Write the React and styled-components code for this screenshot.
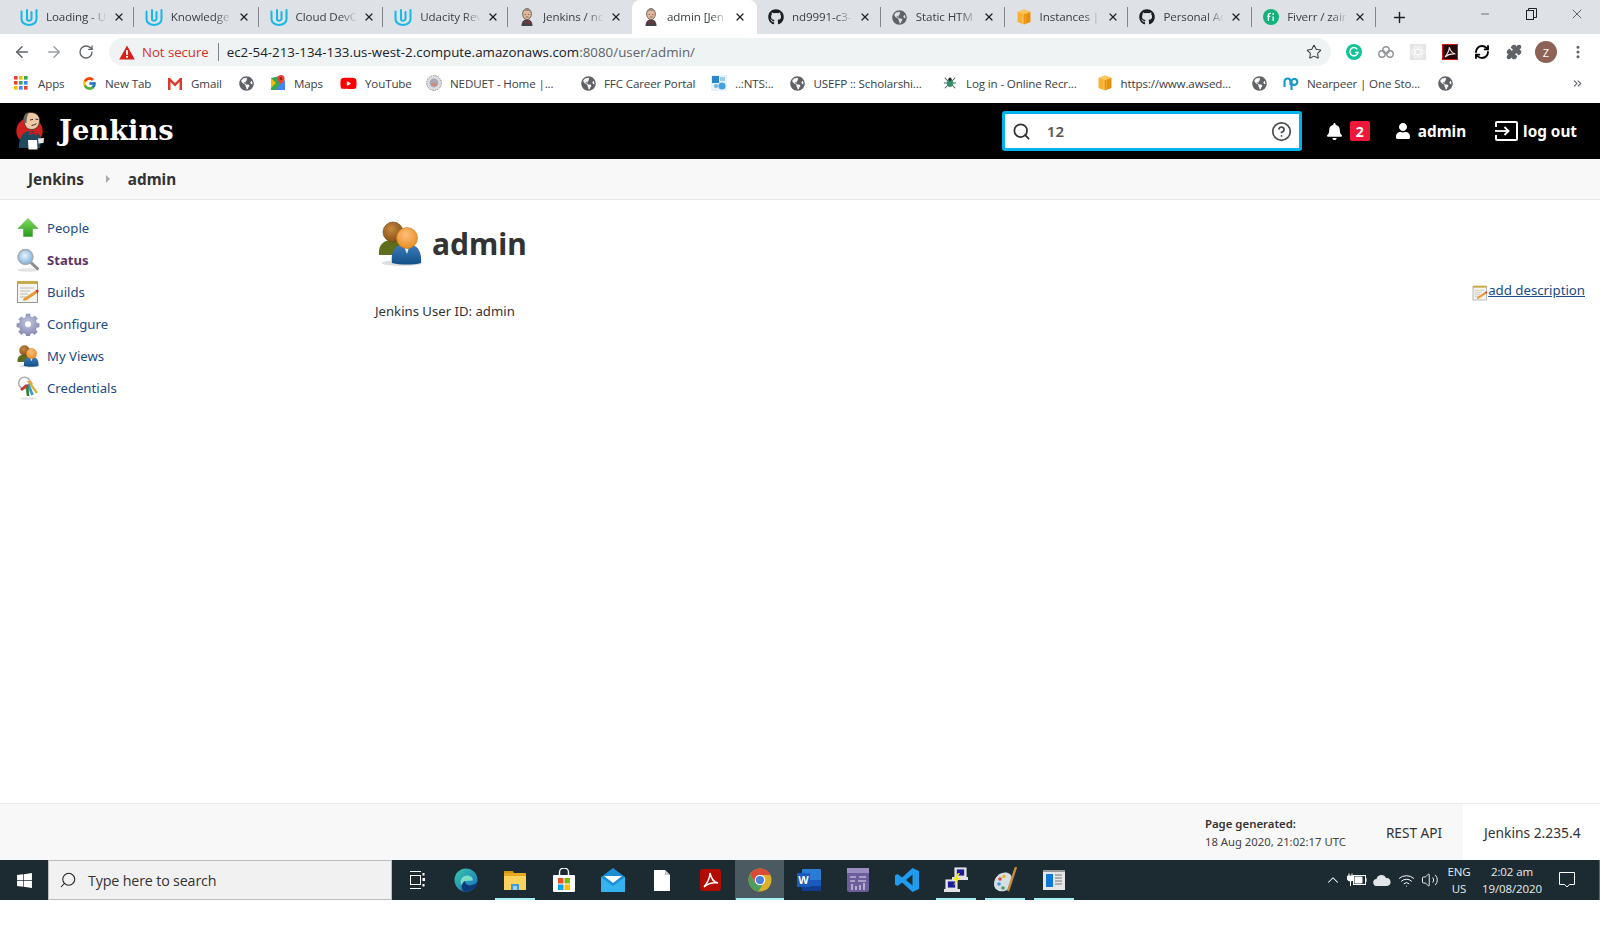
import React, { useId } from "react";
import styled, { createGlobalStyle } from "styled-components";
import { ArrowLeft, ArrowRight, RotateCw, Star, X, Plus, Minus, Search, CircleHelp, Puzzle, RefreshCw, EllipsisVertical, ChevronUp, ChevronsRight, Volume2, Wifi } from "lucide-react";
import { FaGithub, FaGlobeAmericas, FaYoutube, FaWindows, FaBell, FaUser } from "react-icons/fa";
import { FcGoogle } from "react-icons/fc";

const Global = createGlobalStyle`
  html, body { margin: 0; padding: 0; background: #fff; }
  body { font-family: "Noto Sans", "Open Sans", sans-serif; overflow: hidden; }
  a { text-decoration: none; color: inherit; }
`;

const Frame = styled.div`
  width: 1600px; height: 900px; display: flex; flex-direction: column; background: #fff;
`;

/* ---------- browser chrome ---------- */
const TabStrip = styled.div`
  height: 34px; flex: none; display: flex; align-items: stretch; padding-left: 9px; background: #dee1e6; box-sizing: border-box;
`;
const Tab = styled.div`
  flex: 0 0 ${p => p.$w}px; box-sizing: border-box; display: flex; align-items: center; padding-left: 11px; position: relative;
  background: ${p => (p.$active ? "#fff" : "transparent")};
  border-radius: ${p => (p.$active ? "8px 8px 0 0" : "0")};
  &::after {
    content: ""; display: ${p => (p.$sep ? "block" : "none")}; position: absolute; right: 0; top: 7px; bottom: 7px; width: 1px; background: #80868b;
  }
`;
const TabIcon = styled.span`
  flex: 0 0 16px; height: 18px; display: flex; align-items: center; justify-content: center;
`;
const TabTitle = styled.span`
  width: 61px; margin: -2px 0 0 8px; white-space: nowrap; overflow: hidden; font: 11.6px "Open Sans", sans-serif; color: #3c4043; letter-spacing: -0.1px;
  -webkit-mask-image: linear-gradient(to right, #000 72%, transparent 100%);
  mask-image: linear-gradient(to right, #000 72%, transparent 100%);
`;
const TabClose = styled.span`
  width: 12px; height: 12px; margin-left: 6px; display: flex; align-items: center; justify-content: center; color: #202124;
`;
const NewTab = styled.span`
  width: 48px; display: flex; align-items: center; justify-content: center; color: #202124;
`;
const WindowButtons = styled.div`
  margin-left: auto; display: flex; align-items: flex-start; color: #202124;
`;
const WindowButton = styled.span`
  width: 46px; height: 28px; display: flex; align-items: center; justify-content: center;
`;
const AddressRow = styled.div`
  height: 34px; flex: none; display: flex; align-items: center; background: #fff; box-sizing: border-box; padding-top: 2px;
`;
const NavButton = styled.span`
  flex: 0 0 32px; display: flex; justify-content: center; align-items: center; color: ${p => p.$dim ? "#9aa0a6" : "#5f6368"};
`;
const NavGroup = styled.div`
  display: flex; padding-left: 6px; width: 109px; box-sizing: border-box;
`;
const Omnibox = styled.div`
  width: 1222px; height: 28px; border-radius: 14px; background: #eff3f4; display: flex; align-items: center; padding: 0 10px; box-sizing: border-box;
`;
const NotSecure = styled.span`
  font: 13.2px "Open Sans", sans-serif; color: #d93025; margin-left: 7px; letter-spacing: -0.02px; white-space: nowrap;
`;
const Divider = styled.span`
  width: 1px; height: 18px; background: #80868b; margin: 0 8px 0 9px;
`;
const Url = styled.span`
  font: 13.3px "Open Sans", sans-serif; color: #202124; white-space: nowrap; letter-spacing: 0.03px;
  span { color: #5f6368; }
`;
const StarSlot = styled.span`
  margin-left: auto; margin-right: -1px; display: flex; color: #3c4043;
`;
const ExtGroup = styled.div`
  display: flex; margin-left: 7px;
`;
const Ext = styled.span`
  flex: 0 0 32px; display: flex; align-items: center; justify-content: center; color: #202124;
`;
const Avatar = styled.span`
  width: 22px; height: 22px; border-radius: 50%; background: #8d6357; color: #fff; font: 11px "Open Sans", sans-serif; display: flex; align-items: center; justify-content: center;
`;
const BookmarkBar = styled.div`
  height: 35px; flex: none; display: flex; align-items: center; padding: 0 0 5px 13px; background: #fff; box-sizing: border-box;
`;
const Bookmark = styled.div`
  flex: 0 0 ${p => p.$w}px; display: flex; align-items: center; min-width: 0;
`;
const BookmarkIcon = styled.span`
  flex: 0 0 16px; height: 16px; display: flex; align-items: center; justify-content: center;
`;
const BookmarkText = styled.span`
  margin-left: ${p => p.$gap || 8}px; font: 11.6px "Open Sans", sans-serif; color: #3c4043; white-space: nowrap; letter-spacing: -0.14px;
`;
const Overflow = styled.span`
  margin-left: auto; margin-right: 16px; display: flex; color: #5f6368;
`;

/* ---------- Jenkins header ---------- */
const Header = styled.header`
  height: 56px; flex: none; display: flex; align-items: center; background: #000; color: #fff; box-sizing: border-box; padding-left: 16px;
`;
const LogoLink = styled.a`
  display: flex; align-items: center; gap: 13px;
`;
const LogoText = styled.span`
  font: bold 27.3px "DejaVu Serif", serif; color: #fff; line-height: 1;
`;
const SearchBox = styled.div`
  width: 300px; height: 40px; margin-left: auto; box-sizing: border-box; border: 3px solid #00b2f0; border-radius: 3px; background: #fff; display: flex; align-items: center; padding: 0 7px 0 7px; color: #333;
`;
const SearchValue = styled.span`
  font: 600 15px "Noto Sans", sans-serif; color: #555; margin-left: 16px;
`;
const HelpSlot = styled.span`
  margin-left: auto; display: flex; color: #4a4f55;
`;
const HeaderActions = styled.div`
  display: flex; align-items: center; margin-left: 24px; padding-right: 23px;
`;
const Badge = styled.span`
  width: 20px; height: 20px; background: #f0183a; border-radius: 2px; font: bold 14px "Noto Sans", sans-serif; color: #fff; display: flex; align-items: center; justify-content: center; margin-left: 7px;
`;
const HeaderLink = styled.a`
  display: flex; align-items: center; font: bold 15.3px "Noto Sans", sans-serif; color: #fff; margin-left: ${p => p.$ml}px; gap: ${p => p.$gap}px;
`;

/* ---------- breadcrumb ---------- */
const Breadcrumbs = styled.nav`
  height: 41px; flex: none; box-sizing: border-box; border-bottom: 1px solid #e9e9e9; background: #f8f8f8; display: flex; align-items: center; padding-left: 28px; font: bold 15.3px "Noto Sans", sans-serif; color: #333;
`;
const CrumbSep = styled.span`
  margin: 0 18px 0 22px; display: block; width: 0; height: 0; border-left: 4px solid #aaa; border-top: 4px solid transparent; border-bottom: 4px solid transparent;
`;

/* ---------- page body ---------- */
const Body = styled.div`
  flex: 1; display: flex; min-height: 0; background: #fff;
`;
const Side = styled.aside`
  flex: 0 0 375px; padding: 12px 0 0 16px; box-sizing: border-box; display: flex; flex-direction: column;
`;
const SideRow = styled.a`
  height: 32px; display: flex; align-items: center; gap: 7px; font: ${p => (p.$current ? "bold" : "normal")} 13.15px "Noto Sans", sans-serif; color: ${p => (p.$current ? "#5c3566" : "#204a87")};
`;
const SideIcon = styled.span`
  flex: 0 0 24px; height: 24px; display: flex; align-items: center; justify-content: center;
`;
const Main = styled.main`
  flex: 1; display: flex; flex-direction: column; padding-right: 15px;
`;
const Title = styled.h1`
  margin: 18px 0 0 1px; height: 50px; display: flex; align-items: center; gap: 8px; font: bold 30px "Noto Sans", sans-serif; color: #333;
`;
const DescriptionRow = styled.div`
  margin-top: 11px; display: flex; justify-content: flex-end; align-items: flex-end; height: 20px;
`;
const DescriptionLink = styled.a`
  font: 13.3px "Noto Sans", sans-serif; color: #204a87; text-decoration: underline; letter-spacing: -0.03px; display: flex;
  svg { margin: 4px 0 -4px; }
`;
const UserId = styled.p`
  margin: 2px 0 0; font: 13.15px/20px "Noto Sans", sans-serif; color: #333;
`;

/* ---------- footer ---------- */
const Footer = styled.footer`
  height: 57px; flex: none; box-sizing: border-box; border-top: 1px solid #e9e9e9; background: #f8f8f8; display: flex; align-items: stretch; justify-content: flex-end;
`;
const Generated = styled.div`
  display: flex; flex-direction: column; justify-content: center; margin-right: 40px; color: #333; padding-top: 1px;
`;
const GeneratedLabel = styled.span`
  font: 600 11.4px/17px "Noto Sans", sans-serif;
`;
const GeneratedDate = styled.span`
  font: 11.3px/19px "Noto Sans", sans-serif; color: #444;
`;
const RestLink = styled.a`
  font: 13.6px "Noto Sans", sans-serif; color: #333; align-self: center; margin: 1px 21px 0 0;
`;
const Version = styled.div`
  width: 137px; box-sizing: border-box; background: #fff; display: flex; align-items: center; padding: 1px 0 0 21px; font: 13.8px "Noto Sans", sans-serif; color: #333;
`;

/* ---------- taskbar ---------- */
const Taskbar = styled.div`
  height: 40px; flex: none; display: flex; align-items: stretch; background: #1b2b31; color: #fff; border-right: 1px solid #53666d; box-sizing: border-box;
`;
const StartButton = styled.div`
  width: 48px; display: flex; align-items: center; justify-content: center; color: #fff;
`;
const TaskSearch = styled.div`
  width: 344px; box-sizing: border-box; background: #f1f1f1; border: 1px solid #bdbdbd; display: flex; align-items: center; padding-left: 10px; color: #222;
`;
const TaskSearchText = styled.span`
  margin-left: 11px; font: 14.3px "Open Sans", sans-serif; color: #333; letter-spacing: -0.17px;
`;
const TaskApps = styled.div`
  display: flex;
`;
const TaskApp = styled.div`
  flex: 0 0 49px; display: flex; align-items: center; justify-content: center; position: relative;
  background: ${p => (p.$active ? "#4a5a60" : "transparent")};
  &::after {
    content: ""; display: ${p => (p.$open ? "block" : "none")}; position: absolute; bottom: 0; left: 50%; transform: translateX(-50%); width: ${p => p.$bar || 40}px; height: 2px; background: #a6eef9;
  }
`;
const Tray = styled.div`
  margin-left: auto; display: flex; align-items: stretch; padding-right: 13px;
`;
const TrayIcon = styled.span`
  flex: 0 0 ${p => p.$w || 24}px; display: flex; align-items: center; justify-content: center;
`;
const TrayText = styled.div`
  flex: 0 0 ${p => p.$w}px; display: flex; flex-direction: column; align-items: center; justify-content: center; font: 11.5px/17px "Open Sans", sans-serif; color: #e8ecee; letter-spacing: -0.1px;
`;
const BottomStrip = styled.div`
  height: 44px; background: #fff;
`;

/* ---------- drawn icons ---------- */
const UdacityIcon = () => (
  <svg width="18" height="17" viewBox="0 0 18 17" fill="none" style={{ flex: "none" }}>
    <path d="M1.500 2.500 V10 C1.500 13.500 5 15.500 9 16 C13 15.500 16.500 13.500 16.500 10 V1" stroke="#16b8e6" strokeWidth="2" strokeLinecap="round"/>
    <path d="M7 1 V10.500 C7 12.300 11 12 11.500 10 V3" stroke="#16b8e6" strokeWidth="2" strokeLinecap="round"/>
  </svg>
);
const ButlerIcon = () => (
  <svg width="16" height="18" viewBox="0 0 16 18">
    <path d="M2.500 18 C2.500 13 5 11.500 8 11.500 C11 11.500 13.500 13 13.500 18Z" fill="#46424a"/>
    <ellipse cx="8" cy="6" rx="4.400" ry="5.600" fill="#e3b89a" stroke="#5d5148" strokeWidth=".8"/>
    <path d="M3.800 5 C3.800 1.500 6 .4 8 .4 C10 .4 12.200 1.500 12.200 5 L10.500 3 H5.500Z" fill="#9a8f86"/>
    <path d="M5.800 13 l2.200 1.400 2.200 -1.400 v2.600 l-2.200 -1.200 -2.200 1.200Z" fill="#b8232f"/>
    <path d="M5.600 6.500h1.500M8.900 6.500h1.500M6.600 9 h3" stroke="#5d5148" strokeWidth=".7"/>
  </svg>
);
const Globe = () => <FaGlobeAmericas size={15} color="#5f6368" />;
const AwsBox = () => (
  <svg width="16" height="16" viewBox="0 0 16 16">
    <path d="M8 0.5 L14.5 3 V13 L8 15.5Z" fill="#e8900c"/>
    <path d="M8 0.5 L1.5 3 V13 L8 15.5Z" fill="#f9b030"/>
    <path d="M1.5 3 L8 5.2 L14.5 3 L8 .5Z" fill="#fcc660"/>
    <path d="M6.6 5v10M9.4 5v10" stroke="#fff3" strokeWidth="1"/>
  </svg>
);
const FiverrIcon = () => (
  <svg width="16" height="16" viewBox="0 0 16 16">
    <circle cx="8" cy="8" r="8" fill="#10b37a"/>
    <path d="M5.4 12 V6.4 C5.4 4.6 6.6 4.2 8 4.4 M4.2 7.4 H7.4 M10.2 7.4 V12" stroke="#fff" strokeWidth="1.4" fill="none"/>
    <circle cx="10.2" cy="5" r=".9" fill="#fff"/>
  </svg>
);
const WarningIcon = () => (
  <svg width="16" height="15" viewBox="0 0 16 15">
    <path d="M8 .5 L15.8 14.5 H.2Z" fill="#d6201a"/>
    <rect x="7.1" y="5" width="1.8" height="5" fill="#fff"/>
    <rect x="7.1" y="11" width="1.8" height="1.8" fill="#fff"/>
  </svg>
);
const RestoreIcon = () => (
  <svg width="11" height="12" viewBox="0 0 11 12" fill="none" stroke="#202124">
    <rect x=".5" y="2.5" width="7" height="9"/><path d="M2.5 2.5 V.5 H10.5 V9.5 H7.5"/>
  </svg>
);
const AppsGrid = () => {
  const c = ["#ea4335","#fbbc04","#34a853","#ea4335","#34a853","#4285f4","#fbbc04","#4285f4","#ea4335"];
  return (
    <svg width="14" height="14" viewBox="0 0 14 14">
      {c.map((f, i) => <rect key={i} x={(i % 3) * 5} y={Math.floor(i / 3) * 5} width="3.6" height="3.6" fill={f}/>)}
    </svg>
  );
};
const GmailIcon = () => (
  <svg width="16" height="13" viewBox="0 0 16 13">
    <path d="M1 13 V1 H3 L8 6 L13 1 H15 V13 H12.5 V5 L8 9.4 L3.5 5 V13Z" fill="#d93a2c"/>
  </svg>
);
const MapsIcon = () => (
  <svg width="16" height="16" viewBox="0 0 16 16">
    <path d="M1 3 L10 1 V15 L1 15Z" fill="#34a853"/><path d="M10 9 L15 5 V15 H6Z" fill="#4285f4"/><path d="M1 3 L6 8 L1 13Z" fill="#fbbc04"/>
    <path d="M11 0 A3.6 3.6 0 0 1 14.6 3.6 C14.6 6 12 7.5 11 10 C10 7.5 7.4 6 7.4 3.6 A3.6 3.6 0 0 1 11 0Z" fill="#ea4335"/>
    <circle cx="11" cy="3.6" r="1.3" fill="#8e1b12"/>
  </svg>
);
const NeduetIcon = () => (
  <svg width="16" height="16" viewBox="0 0 16 16">
    <circle cx="8" cy="8" r="7.4" fill="#ddd" stroke="#8a8a8a" strokeDasharray="1.4 1"/>
    <circle cx="8" cy="8" r="4.4" fill="#a8a6b8"/><path d="M5 11h6l-1-3H6Z" fill="#d08a7c"/>
  </svg>
);
const NtsIcon = () => (
  <svg width="16" height="16" viewBox="0 0 16 16">
    <rect width="16" height="16" fill="#e8f2fb"/><rect x="1" y="1" width="7" height="7" fill="#2a86c8"/>
    <circle cx="11" cy="11" r="3.6" fill="#46a3dc"/><circle cx="5" cy="11" r="2" fill="#6fb5e2"/><path d="M9 2h5v4H9Z" fill="#9ccbea"/>
  </svg>
);
const BugIcon = () => (
  <svg width="14" height="14" viewBox="0 0 16 16">
    <path d="M2 2 L14 14 M14 2 L2 14 M1 8 H15" stroke="#4a5a4e" strokeWidth="1.2"/>
    <ellipse cx="8" cy="8" rx="3.4" ry="4.6" fill="#2f8f66"/><circle cx="8" cy="3.6" r="1.8" fill="#222"/>
  </svg>
);
const NearpeerIcon = () => (
  <svg width="16" height="16" viewBox="0 0 16 16" fill="none" stroke="#1597c9" strokeWidth="2.1">
    <path d="M1.5 12 V6.5 A3 3 0 0 1 7.5 6.5 V10"/><path d="M8.5 15 V6 A3 3 0 1 1 9.2 9" />
  </svg>
);
const GrammarlyIcon = () => (
  <svg width="16" height="16" viewBox="0 0 16 16">
    <circle cx="8" cy="8" r="8" fill="#12c39a"/>
    <path d="M11.4 5.4 A4.1 4.1 0 1 0 12 8.5 H9" stroke="#fff" strokeWidth="1.4" fill="none"/>
  </svg>
);
const CloudExt = () => (
  <svg width="18" height="14" viewBox="0 0 18 14" fill="none" stroke="#8f9499" strokeWidth="1.4">
    <circle cx="5" cy="9" r="3.2"/><circle cx="13" cy="9" r="3.2"/><circle cx="9" cy="5" r="3.2"/>
  </svg>
);
const ReactExt = () => (
  <svg width="16" height="16" viewBox="0 0 16 16" fill="none" stroke="#fff" strokeWidth=".8">
    <rect width="16" height="16" fill="#e5e5e5" stroke="none"/>
    <ellipse cx="8" cy="8" rx="6.4" ry="2.6"/><ellipse cx="8" cy="8" rx="6.4" ry="2.6" transform="rotate(60 8 8)"/><ellipse cx="8" cy="8" rx="6.4" ry="2.6" transform="rotate(120 8 8)"/>
  </svg>
);
const AcrobatExt = () => (
  <svg width="16" height="16" viewBox="0 0 16 16">
    <rect x=".5" y=".5" width="15" height="15" fill="#24090b" stroke="#d6121f"/>
    <path d="M3 13 C6 9 7.5 6 7.4 3 C8 6 9.5 9 13.4 10 C10 9.6 6 10.4 3 13Z" fill="none" stroke="#eedcdc" strokeWidth="1.1"/>
  </svg>
);
const JenkinsLogo = () => (
  <svg width="30" height="40" viewBox="0 0 30 40">
    <circle cx="13.500" cy="20" r="13.200" fill="#d0201f"/>
    <path d="M3 37 C2.500 28 6 21 13 20 C19 19.500 24 22 25 28 L24 37Z" fill="#1f4a5e"/>
    <path d="M8 10 C7.500 4 10.500 1.500 15 1.500 C20 1.500 23.800 4.500 23.500 10 C23.200 15.500 20 18.500 15.500 18.500 C11 18.500 8.500 15 8 10Z" fill="#efc9a6" stroke="#3e2d27" strokeWidth=".8"/>
    <path d="M7.800 12 C6.500 6 9 2 13 1.500 C11 4 10.500 8 10.500 12Z" fill="#6a6560"/>
    <path d="M14 9 l3 -.6 M19.500 8.200 l2.600 .3 M15.500 14.500 q3 -.4 5 -1.800" stroke="#3e2d27" strokeWidth="1" fill="none"/>
    <path d="M13 19.500 L17 21.500 L21 19.500 V24.500 L17 22.500 L13 24.500Z" fill="#c81d25"/>
    <path d="M12 29 H21 L21.500 38.500 H12.500Z" fill="#fff"/>
    <path d="M22 27.500 L28 27 L27.500 32 L22.500 32.500Z" fill="#e8e8e8"/>
  </svg>
);

const PeopleIcon = ({ size }) => {
  const id = useId();
  return (
    <svg width={size} height={size} viewBox="0 0 48 48">
      <defs>
        <radialGradient id={id + "a"} cx=".4" cy=".35" r=".7"><stop offset="0" stopColor="#c9893f"/><stop offset="1" stopColor="#7d4d15"/></radialGradient>
        <radialGradient id={id + "b"} cx=".45" cy=".35" r=".7"><stop offset="0" stopColor="#fcc07a"/><stop offset="1" stopColor="#e88a1e"/></radialGradient>
        <linearGradient id={id + "c"} x1="0" y1="0" x2="0" y2="1"><stop offset="0" stopColor="#3b7fbe"/><stop offset="1" stopColor="#134f87"/></linearGradient>
      </defs>
      <ellipse cx="26" cy="44" rx="20" ry="3" fill="#00000022"/>
      <path d="M3 36 C2 25 8 21 17 21 C26 21 30 25 30 36Z" fill="#5e6d1c"/>
      <circle cx="17" cy="13" r="10" fill={`url(#${id}a)`} stroke="#6b4011" strokeWidth=".6"/>
      <path d="M16 44 C14 30 22 25 30 25 C40 25 46 30 45 44 C38 46 24 46 16 44Z" fill={`url(#${id}c)`}/>
      <path d="M27 25 L31 35 L34 25Z" fill="#eef2f5"/>
      <circle cx="31" cy="19" r="10.5" fill={`url(#${id}b)`} stroke="#c9741a" strokeWidth=".6"/>
    </svg>
  );
};
const UpArrowIcon = () => (
  <svg width="22" height="22" viewBox="0 0 22 22">
    <defs><linearGradient id="upa" x1="0" y1="0" x2="0" y2="1"><stop offset="0" stopColor="#7fdc58"/><stop offset="1" stopColor="#2a9a22"/></linearGradient></defs>
    <path d="M11 1.5 L21 11.5 H15.5 V19.5 H6.5 V11.5 H1Z" fill="url(#upa)" stroke="#3f9c2b" strokeWidth=".5"/>
  </svg>
);
const MagnifierIcon = () => (
  <svg width="24" height="24" viewBox="0 0 24 24">
    <defs><radialGradient id="mga" cx=".45" cy=".4" r=".6"><stop offset="0" stopColor="#e8f2fb"/><stop offset="1" stopColor="#7fb2e0"/></radialGradient></defs>
    <ellipse cx="12" cy="22" rx="11" ry="1.8" fill="#0000001c"/>
    <path d="M15 14.6 L21.5 20.6" stroke="#8e8e8e" strokeWidth="3" strokeLinecap="round"/>
    <circle cx="9.5" cy="9" r="7.4" fill="url(#mga)" stroke="#a4acb4" strokeWidth="1.6"/>
  </svg>
);
const NotepadIcon = ({ size = 24 }) => (
  <svg width={size} height={size} viewBox="0 0 24 24">
    <rect x="1.5" y="2" width="20" height="20.5" fill="#f4f4f0" stroke="#9a9a90"/>
    <rect x="1.5" y="1" width="20" height="3" fill="#c9a94a"/>
    <path d="M4 8h14M4 11h10M4 14h8M4 17h6" stroke="#bcbcb4" strokeWidth="1"/>
    <path d="M7.5 18.5 L19 11 L21.5 13 L10 20.5 L7 20.8Z" fill="#e89a3a"/>
    <path d="M19 11 L21.5 13 L23 11 L21 9.4Z" fill="#d0342c"/>
  </svg>
);
const GearIcon = () => (
  <svg width="24" height="24" viewBox="0 0 24 24">
    <defs><radialGradient id="gra" cx=".5" cy=".4" r=".7"><stop offset="0" stopColor="#c4c6e2"/><stop offset="1" stopColor="#7c80aa"/></radialGradient></defs>
    <path fillRule="evenodd" fill="url(#gra)" stroke="#7478a0" strokeWidth=".4" d="M10 .8h4l.6 3.2 2.2.9 2.7-1.9 2.9 2.9-1.9 2.7.9 2.2 3 .6v4l-3 .6-.9 2.2 1.9 2.7-2.9 2.9-2.7-1.9-2.2.9-.6 2.4h-4l-.6-2.4-2.2-.9-2.7 1.9-2.9-2.9 1.9-2.7-.9-2.2-3-.6v-4l3-.6.9-2.2L1.6 6.900l2.9-2.900 2.700 1.900 2.200-.9z M12 8.400a3.800 3.800 0 1 0 0 7.600a3.800 3.800 0 1 0 0-7.600z" transform="translate(1.2 1.2) scale(.9)"/>
  </svg>
);
const KeysIcon = () => (
  <svg width="24" height="24" viewBox="0 0 24 24" fill="none">
    <ellipse cx="12" cy="22.500" rx="8" ry="1.300" fill="#0000001c"/>
    <circle cx="8.500" cy="7" r="5.800" stroke="#a9aeb3" strokeWidth="1.500"/>
    <path d="M13 6 L21 17" stroke="#d8b43c" strokeWidth="2.500"/>
    <path d="M12 8 L16.500 19" stroke="#3c9ad2" strokeWidth="2.800"/>
    <path d="M11 9 L12 20" stroke="#2f7f3a" strokeWidth="2.600"/>
    <path d="M11 9 L5 14" stroke="#d0342c" strokeWidth="2.800"/>
    <path d="M11.500 6 A3 3 0 0 1 16 8" stroke="#e9a23a" strokeWidth="2"/>
  </svg>
);
const LogoutIcon = () => (
  <svg width="23" height="20" viewBox="0 0 23 20" fill="none" stroke="#fff" strokeWidth="2">
    <path d="M1 6 V2 Q1 1 2 1 H21 Q22 1 22 2 V18 Q22 19 21 19 H2 Q1 19 1 18 V14"/>
    <path d="M0 10 H13" strokeWidth="1.800"/><path d="M9.500 6 L13.500 10 L9.500 14" strokeWidth="1.800"/>
  </svg>
);
const TaskViewIcon = () => (
  <svg width="16" height="18" viewBox="0 0 16 18" fill="none" stroke="#fff" strokeWidth="1">
    <path d="M1 .5H12M1 17.500H12"/><rect x="1.500" y="4.500" width="10" height="9"/><rect x="13.500" y="2" width="2" height="2.500" fill="#fff" stroke="none"/><rect x="13.500" y="7" width="2.500" height="3" fill="#fff" stroke="none"/><rect x="13.500" y="13" width="2" height="2.500" fill="#fff" stroke="none"/>
  </svg>
);
const EdgeIcon = () => (
  <svg width="24" height="24" viewBox="0 0 24 24">
    <defs><linearGradient id="eda" x1="0" y1="0" x2="1" y2="1"><stop offset="0" stopColor="#36c8a8"/><stop offset="1" stopColor="#1a6fc4"/></linearGradient></defs>
    <circle cx="12" cy="12" r="11.500" fill="url(#eda)"/>
    <path d="M23.500 13 C23 20 17 23.500 12 23.500 C5.500 23.500 7 15 11 12.500 C11 16 14 18.500 18 17 C21 16 23 15 23.500 13Z" fill="#0c3a78"/>
    <path d="M8 17 C5 14 7 8 13 7.500 C17 7.500 19 10 18.800 12.500 L11 13 C9 14 8 15.500 8 17Z" fill="#7adfc5"/>
  </svg>
);
const FolderIcon = () => (
  <svg width="22" height="20" viewBox="0 0 22 20">
    <path d="M0 1 H9 L10 3 H0Z" fill="#d6940e"/><rect y="3" width="22" height="17" fill="#f9d35c"/>
    <rect y="3" width="22" height="3" fill="#e6a91e"/>
    <path d="M7 20 V14 H15 V20 H13 V16 H9 V20Z" fill="#3f9bd8"/><rect x="9" y="16" width="4" height="4" fill="#9fd0ef"/>
  </svg>
);
const StoreIcon = () => (
  <svg width="24" height="24" viewBox="0 0 24 24">
    <rect x="1" y="7" width="22" height="17" rx="1" fill="#fff"/>
    <path d="M7.500 9 V4 A4.500 4 0 0 1 16.500 4 V9" stroke="#fff" strokeWidth="1.400" fill="none"/>
    <rect x="6" y="10" width="5.500" height="5.500" fill="#e8502a"/><rect x="12.500" y="10" width="5.500" height="5.500" fill="#7fba00"/>
    <rect x="6" y="16.500" width="5.500" height="5.500" fill="#00a4ef"/><rect x="12.500" y="16.500" width="5.500" height="5.500" fill="#ffb900"/>
  </svg>
);
const MailIcon = () => (
  <svg width="24" height="24" viewBox="0 0 24 24">
    <path d="M0 9 L12 0 L24 9 V24 H0Z" fill="#1b8ed6"/><path d="M0 9 L12 18 L24 9 V24 H0Z" fill="#35b3ee"/>
    <path d="M3 8 H21 L12 15Z" fill="#fff"/>
  </svg>
);
const FileIcon = () => (
  <svg width="16" height="21" viewBox="0 0 16 21">
    <path d="M0 0 H11 L16 5 V21 H0Z" fill="#fff"/><path d="M11 0 L16 5 H11Z" fill="#c8c8c8"/>
  </svg>
);
const AcrobatTask = () => (
  <svg width="22" height="22" viewBox="0 0 22 22">
    <rect width="21" height="22" rx="3" fill="#b30b00"/>
    <path d="M4 18 C8 13 10 9 10 4 C11 9 13 13 18 14 C13 13.500 8 14.500 4 18Z" fill="none" stroke="#fff" strokeWidth="1.500"/>
  </svg>
);
const ChromeIcon = () => (
  <svg width="24" height="24" viewBox="0 0 24 24">
    <circle cx="12" cy="12" r="11.500" fill="#ddb02a"/>
    <path d="M12 .5 A11.500 11.500 0 0 0 2 6.400 L7 15 L12 7 H22.600 A11.500 11.500 0 0 0 12 .5Z" fill="#d94a38"/>
    <path d="M2 6.400 A11.500 11.500 0 0 0 10.500 23.400 L16 14 L7 15Z" fill="#4a9d5b"/>
    <circle cx="12" cy="12" r="5.300" fill="#fff"/><circle cx="12" cy="12" r="4.100" fill="#4a80dc"/>
  </svg>
);
const WordIcon = () => (
  <svg width="24" height="22" viewBox="0 0 24 22">
    <rect x="5" y="0" width="19" height="22" rx="1" fill="#2b7cd3"/><rect x="5" y="11" width="19" height="6" fill="#185abd"/><rect x="5" y="17" width="19" height="5" fill="#103f91"/>
    <rect x="0" y="4" width="13" height="14" fill="#185abd"/>
    <text x="6.500" y="15" textAnchor="middle" fontFamily="Liberation Sans" fontWeight="bold" fontSize="11" fill="#fff">W</text>
  </svg>
);
const PanelIcon = () => (
  <svg width="22" height="24" viewBox="0 0 22 24">
    <rect width="22" height="24" rx="2" fill="#6b5e9a"/>
    <rect width="22" height="5" fill="#9a8fc0"/>
    <path d="M3 9h6M12 9h7M3 13h5M11 13h8M5 16v6M9 18v4M13 17v5M17 15v7" stroke="#e4e0f0" strokeWidth="1.200"/>
  </svg>
);
const VsCodeIcon = () => (
  <svg width="24" height="24" viewBox="0 0 24 24">
    <path d="M17.500 0 L24 3 V21 L17.500 24 L7 14.500 L2.500 18 L0 16.500 V7.500 L2.500 6 L7 9.500Z M17.500 6.500 L11 12 L17.500 17.500Z" fillRule="evenodd" fill="#1f9cf0"/>
  </svg>
);
const PuttyIcon = () => (
  <svg width="24" height="26" viewBox="0 0 24 26">
    <rect x="11" y="1" width="11" height="9" fill="#c8c8c8" stroke="#fff"/><rect x="13" y="2.500" width="7" height="6" fill="#1a1aa0"/>
    <rect x="8" y="10" width="16" height="3" fill="#e2e2e2"/>
    <rect x="2" y="13" width="11" height="9" fill="#c8c8c8" stroke="#fff"/><rect x="4" y="14.500" width="7" height="6" fill="#1a1aa0"/>
    <rect x="0" y="22" width="16" height="3" fill="#e2e2e2"/>
    <path d="M14 6 L9 13 L12 13 L9 19 L16 11 L13 11 L16 6Z" fill="#f5e71e"/>
  </svg>
);
const PaintIcon = () => (
  <svg width="24" height="26" viewBox="0 0 24 26">
    <path d="M1 17 C1 9 9 4 15 6 C21 8 20 18 14 23 C9 26 1 24 1 17Z" fill="#d4dfe6"/>
    <circle cx="7" cy="12" r="1.800" fill="#d94a38"/><circle cx="11" cy="9.500" r="1.800" fill="#f0b429"/><circle cx="6" cy="17" r="1.800" fill="#3c9ad2"/><circle cx="10" cy="21" r="1.800" fill="#4a9d5b"/>
    <path d="M23 0 L15 24" stroke="#c98a3c" strokeWidth="2.400"/>
  </svg>
);
const WindowAppIcon = () => (
  <svg width="22" height="20" viewBox="0 0 22 20">
    <rect width="22" height="20" fill="#e6e6e6"/><rect y="0" width="22" height="2" fill="#999"/>
    <rect x="3" y="4" width="7" height="13" fill="#0d78d6"/>
    <path d="M12 5h7M12 8h7M12 11h7M12 14h7" stroke="#777" strokeWidth="1.200"/>
  </svg>
);
const PlugIcon = () => (
  <svg width="20" height="14" viewBox="0 0 20 14" fill="none" stroke="#fff">
    <path d="M2 .5 V3 M5 .5 V3" /><path d="M.5 3 H6.500 V6 Q6.500 8 3.500 8 Q.5 8 .5 6Z" fill="#fff"/><path d="M3.500 8 V13"/>
    <rect x="6.500" y="2.500" width="12" height="9" /><rect x="8" y="4" width="7" height="6" fill="#fff"/><path d="M19 5v4"/>
  </svg>
);
const CloudIcon = () => (
  <svg width="18" height="12" viewBox="0 0 18 12">
    <path d="M4 12 A3.500 3.500 0 0 1 3.500 5 A5 5 0 0 1 13 4 A4 4 0 0 1 14 12Z" fill="#e3e6e8"/>
  </svg>
);
const NotificationIcon = () => (
  <svg width="16" height="16" viewBox="0 0 16 16" fill="none" stroke="#fff">
    <path d="M.5 .5 H15.500 V12.500 H10.500 L8 15 L5.500 12.500 H.5Z"/>
  </svg>
);

/* ---------- data ---------- */
const tabs = [
  { t: "Loading - U", i: <UdacityIcon />, sep: 1, w: 124.75 },
  { t: "Knowledge", i: <UdacityIcon />, sep: 1, w: 124.75 },
  { t: "Cloud DevC", i: <UdacityIcon />, sep: 1, w: 124.75 },
  { t: "Udacity Rev", i: <UdacityIcon />, sep: 1, w: 124.75 },
  { t: "Jenkins / nc", i: <ButlerIcon />, sep: 0, w: 124 },
  { t: "admin [Jen", i: <ButlerIcon />, active: 1, w: 125 },
  { t: "nd9991-c3-", i: <FaGithub size={16} color="#1b1f23" />, sep: 1, w: 123.8 },
  { t: "Static HTM", i: <Globe />, sep: 1, w: 123.8 },
  { t: "Instances |", i: <AwsBox />, sep: 1, w: 123.8 },
  { t: "Personal Ac", i: <FaGithub size={16} color="#1b1f23" />, sep: 1, w: 123.8 },
  { t: "Fiverr / zair", i: <FiverrIcon />, sep: 1, w: 123.8 },
];
const bookmarks = [
  { w: 68, t: "Apps", i: <AppsGrid />, gap: 9 },
  { w: 86, t: "New Tab", i: <FcGoogle size={15} /> },
  { w: 71, t: "Gmail", i: <GmailIcon /> },
  { w: 32, i: <Globe /> },
  { w: 70, t: "Maps", i: <MapsIcon /> },
  { w: 86, t: "YouTube", i: <FaYoutube size={17} color="#f00" /> },
  { w: 154, t: "NEDUET - Home |...", i: <NeduetIcon /> },
  { w: 131, t: "FFC Career Portal", i: <Globe /> },
  { w: 78.5, t: "..:NTS:..", i: <NtsIcon /> },
  { w: 152.5, t: "USEFP :: Scholarshi...", i: <Globe /> },
  { w: 154.5, t: "Log in - Online Recr...", i: <BugIcon /> },
  { w: 154.5, t: "https://www.awsed...", i: <AwsBox /> },
  { w: 32, i: <Globe /> },
  { w: 154, t: "Nearpeer | One Sto...", i: <NearpeerIcon /> },
  { w: 32, i: <Globe /> },
];
const sideItems = [
  { t: "People", i: <UpArrowIcon /> },
  { t: "Status", i: <MagnifierIcon />, current: 1 },
  { t: "Builds", i: <NotepadIcon /> },
  { t: "Configure", i: <GearIcon /> },
  { t: "My Views", i: <PeopleIcon size={24} /> },
  { t: "Credentials", i: <KeysIcon /> },
];
const taskApps = [
  { i: <TaskViewIcon /> },
  { i: <EdgeIcon /> },
  { i: <FolderIcon />, open: 1 },
  { i: <StoreIcon /> },
  { i: <MailIcon /> },
  { i: <FileIcon /> },
  { i: <AcrobatTask /> },
  { i: <ChromeIcon />, active: 1, open: 1, bar: 48 },
  { i: <WordIcon /> },
  { i: <PanelIcon /> },
  { i: <VsCodeIcon /> },
  { i: <PuttyIcon />, open: 1 },
  { i: <PaintIcon />, open: 1 },
  { i: <WindowAppIcon />, open: 1 },
];

export default function App() {
  return (
    <>
      <Global />
      <Frame>
        <TabStrip>
          {tabs.map(tab => (
            <Tab key={tab.t} $w={tab.w} $active={tab.active} $sep={tab.sep}>
              <TabIcon>{tab.i}</TabIcon>
              <TabTitle>{tab.t}</TabTitle>
              <TabClose><X size={12} strokeWidth={2.4} /></TabClose>
            </Tab>
          ))}
          <NewTab><Plus size={17} strokeWidth={2} /></NewTab>
          <WindowButtons>
            <WindowButton><Minus size={12} strokeWidth={1.2} /></WindowButton>
            <WindowButton><RestoreIcon /></WindowButton>
            <WindowButton><X size={16} strokeWidth={1} /></WindowButton>
          </WindowButtons>
        </TabStrip>

        <AddressRow>
          <NavGroup>
            <NavButton><ArrowLeft size={18} strokeWidth={2} /></NavButton>
            <NavButton $dim><ArrowRight size={18} strokeWidth={2} /></NavButton>
            <NavButton><RotateCw size={16} strokeWidth={2} /></NavButton>
          </NavGroup>
          <Omnibox>
            <WarningIcon />
            <NotSecure>Not secure</NotSecure>
            <Divider />
            <Url>ec2-54-213-134-133.us-west-2.compute.amazonaws.com<span>:8080/user/admin/</span></Url>
            <StarSlot><Star size={16} strokeWidth={1.6} /></StarSlot>
          </Omnibox>
          <ExtGroup>
            <Ext><GrammarlyIcon /></Ext>
            <Ext><CloudExt /></Ext>
            <Ext><ReactExt /></Ext>
            <Ext><AcrobatExt /></Ext>
            <Ext><RefreshCw size={16} strokeWidth={2.8} color="#000" /></Ext>
            <Ext><Puzzle size={16} fill="#5f6368" color="#5f6368" /></Ext>
            <Ext><Avatar>Z</Avatar></Ext>
            <Ext><EllipsisVertical size={16} color="#5f6368" strokeWidth={2.6} /></Ext>
          </ExtGroup>
        </AddressRow>

        <BookmarkBar>
          {bookmarks.map((b, n) => (
            <Bookmark key={n} $w={b.w}>
              <BookmarkIcon>{b.i}</BookmarkIcon>
              {b.t && <BookmarkText $gap={b.gap}>{b.t}</BookmarkText>}
            </Bookmark>
          ))}
          <Overflow><ChevronsRight size={13} /></Overflow>
        </BookmarkBar>

        <Header>
          <LogoLink>
            <JenkinsLogo />
            <LogoText>Jenkins</LogoText>
          </LogoLink>
          <SearchBox>
            <Search size={19} strokeWidth={2.2} />
            <SearchValue>12</SearchValue>
            <HelpSlot><CircleHelp size={21} strokeWidth={2} /></HelpSlot>
          </SearchBox>
          <HeaderActions>
            <FaBell size={17} />
            <Badge>2</Badge>
            <HeaderLink $ml={25} $gap={7}><FaUser size={16} />admin</HeaderLink>
            <HeaderLink $ml={29} $gap={5}><LogoutIcon />log out</HeaderLink>
          </HeaderActions>
        </Header>

        <Breadcrumbs>
          <a>Jenkins</a>
          <CrumbSep />
          <a>admin</a>
        </Breadcrumbs>

        <Body>
          <Side>
            {sideItems.map(s => (
              <SideRow key={s.t} $current={s.current}>
                <SideIcon>{s.i}</SideIcon>
                {s.t}
              </SideRow>
            ))}
          </Side>
          <Main>
            <Title><PeopleIcon size={48} />admin</Title>
            <DescriptionRow>
              <DescriptionLink><NotepadIcon size={16} />add description</DescriptionLink>
            </DescriptionRow>
            <UserId>Jenkins User ID: admin</UserId>
          </Main>
        </Body>

        <Footer>
          <Generated>
            <GeneratedLabel>Page generated:</GeneratedLabel>
            <GeneratedDate>18 Aug 2020, 21:02:17 UTC</GeneratedDate>
          </Generated>
          <RestLink>REST API</RestLink>
          <Version>Jenkins 2.235.4</Version>
        </Footer>

        <Taskbar>
          <StartButton><FaWindows size={17} /></StartButton>
          <TaskSearch>
            <Search size={18} strokeWidth={1.4} style={{ transform: "scaleX(-1)" }} />
            <TaskSearchText>Type here to search</TaskSearchText>
          </TaskSearch>
          <TaskApps>
            {taskApps.map((a, n) => (
              <TaskApp key={n} $active={a.active} $open={a.open} $bar={a.bar}>{a.i}</TaskApp>
            ))}
          </TaskApps>
          <Tray>
            <TrayIcon><ChevronUp size={18} strokeWidth={1.4} /></TrayIcon>
            <TrayIcon><PlugIcon /></TrayIcon>
            <TrayIcon $w={25}><CloudIcon /></TrayIcon>
            <TrayIcon><Wifi size={17} strokeWidth={1.4} /></TrayIcon>
            <TrayIcon><Volume2 size={18} strokeWidth={1.2} /></TrayIcon>
            <TrayText $w={34}><span>ENG</span><span>US</span></TrayText>
            <TrayText $w={72}><span>2:02 am</span><span>19/08/2020</span></TrayText>
            <TrayIcon $w={38}><NotificationIcon /></TrayIcon>
          </Tray>
        </Taskbar>
      </Frame>
      <BottomStrip />
    </>
  );
}
